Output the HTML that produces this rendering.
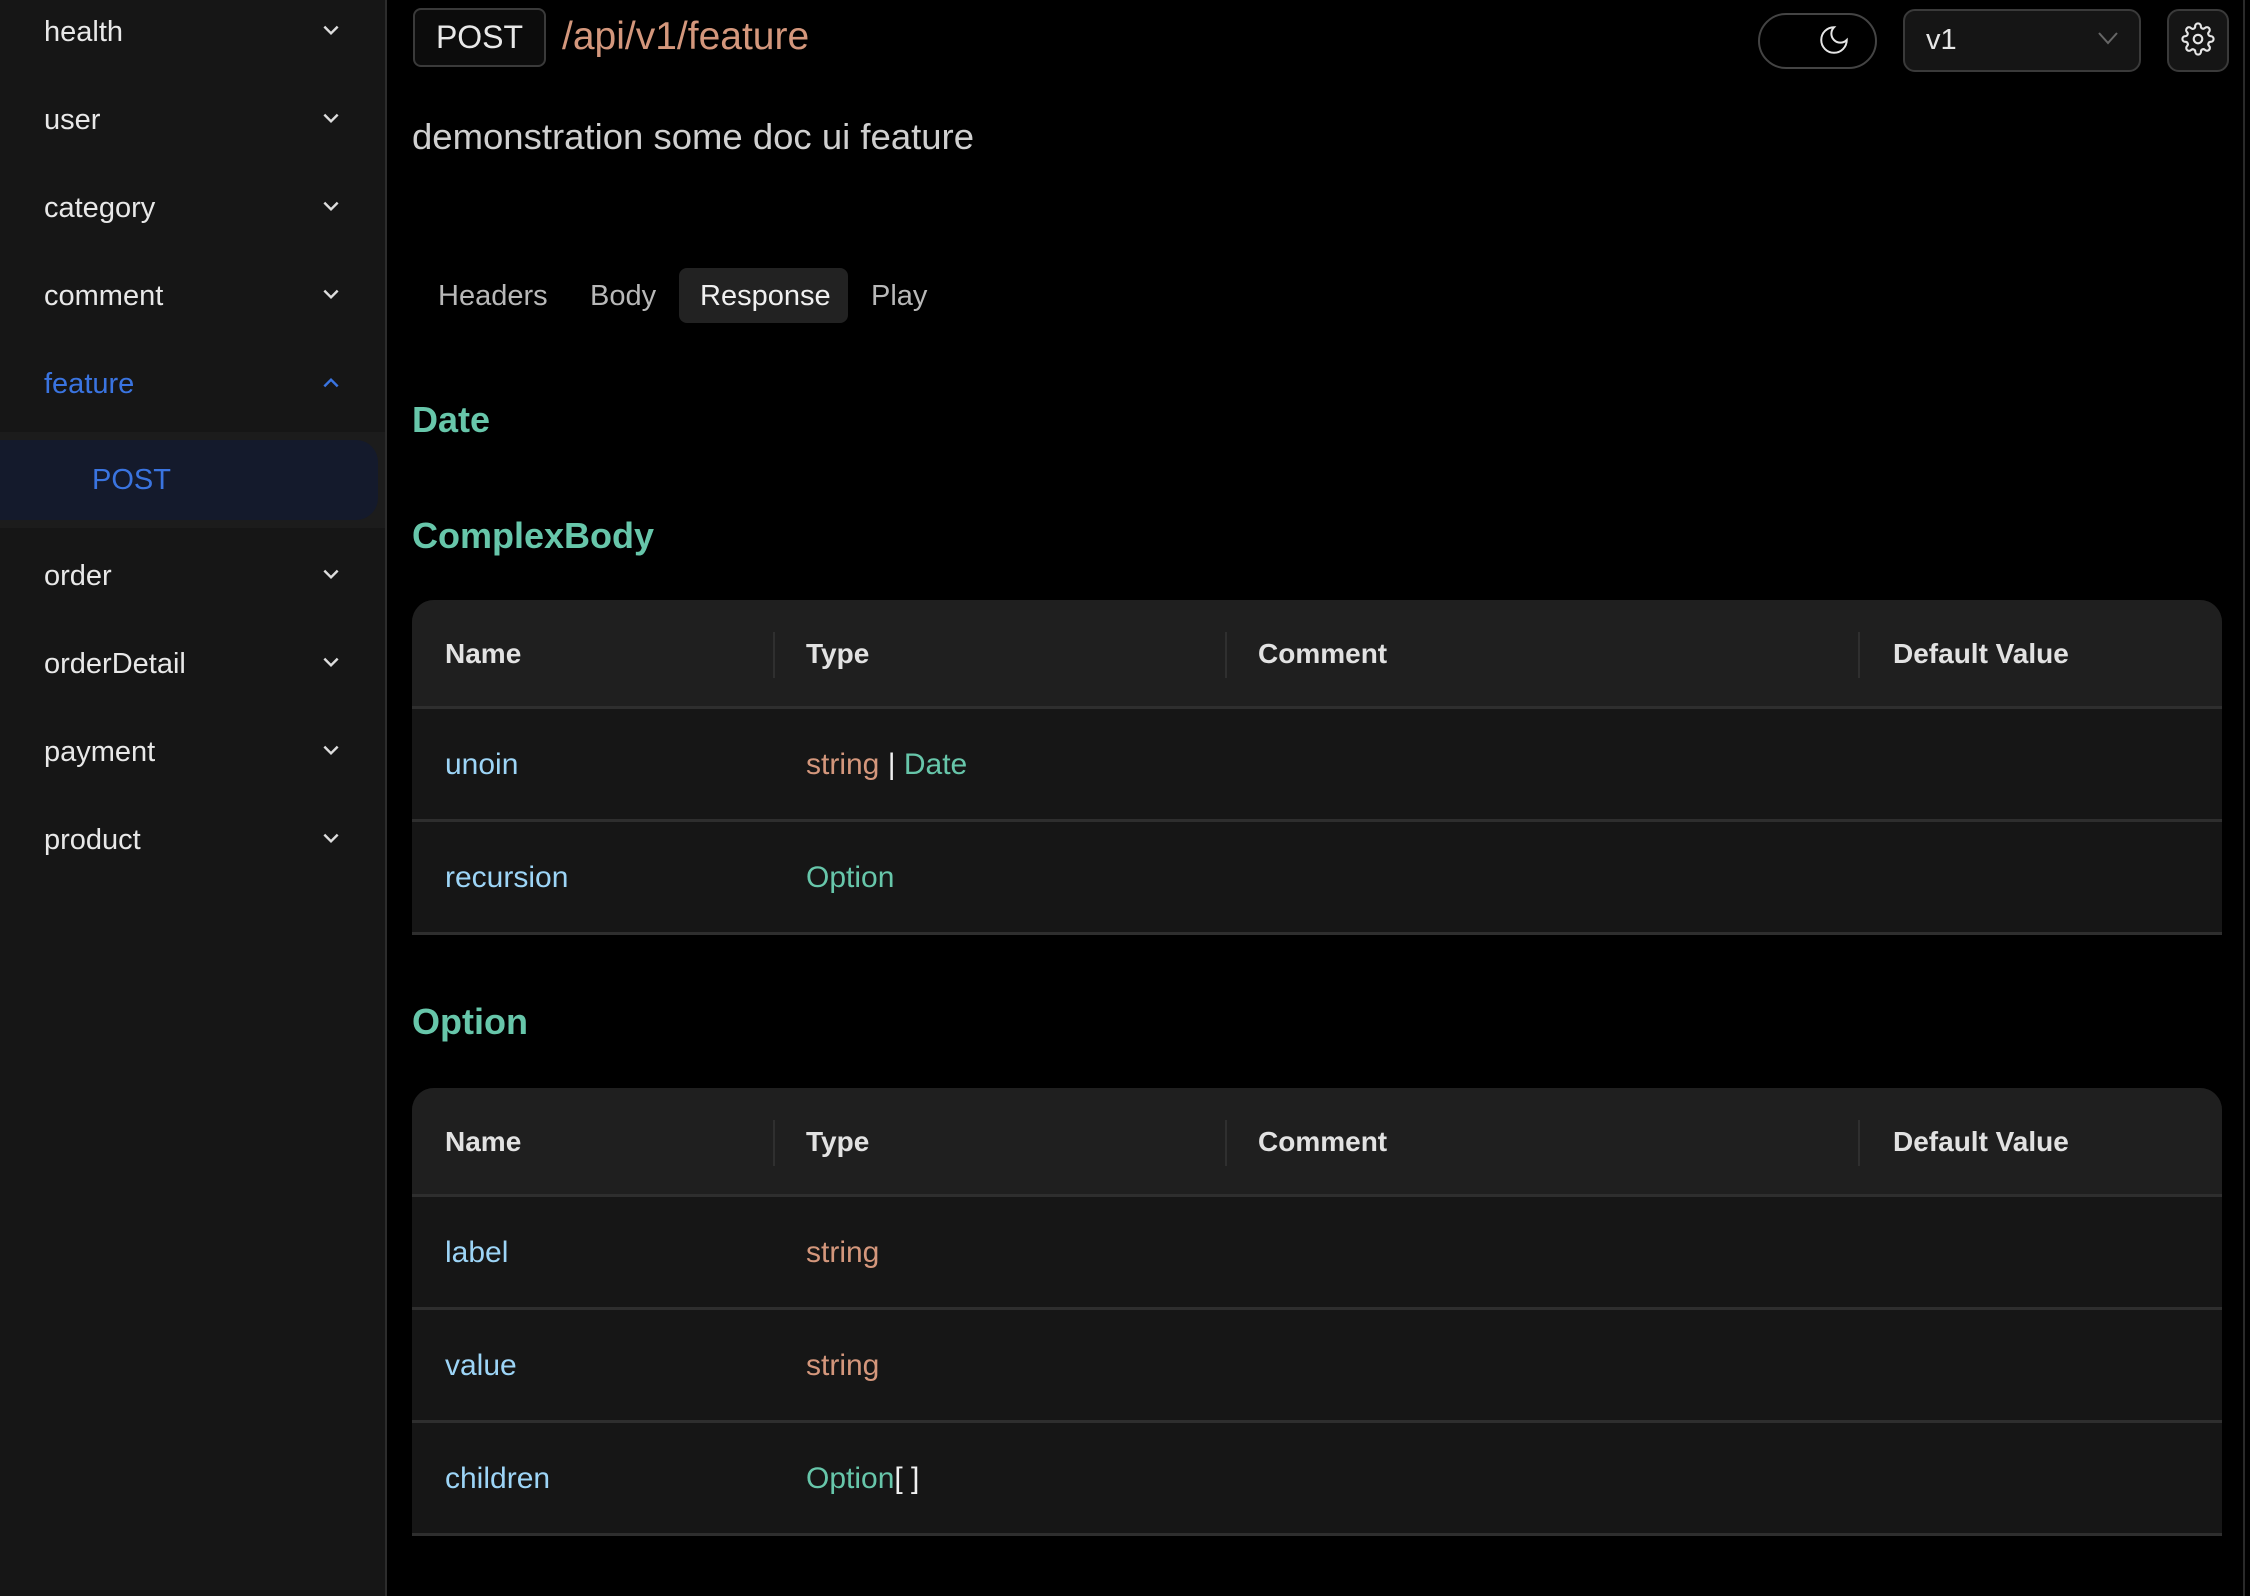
<!DOCTYPE html>
<html><head><meta charset="utf-8"><style>
*{box-sizing:border-box;margin:0;padding:0}
body{width:2250px;height:1596px;background:#000;font-family:"Liberation Sans",sans-serif;position:relative;overflow:hidden;color:#e6e6e6}
.abs{position:absolute}
.side{left:0;top:0;width:387px;height:1596px;background:#161616;border-right:2px solid #2c2c2c}
.it{position:absolute;left:44px;font-size:29px;color:#e8e8e8;line-height:40px}
.chev{position:absolute;left:321px;width:20px;height:20px}
.sub{left:0;top:432px;width:385px;height:96px;background:#1c1c1c}
.pill{left:0;top:440px;width:378px;height:80px;background:#141a2c;border-radius:0 22px 22px 0}
.tbl{position:absolute;left:412px;width:1810px;background:#161616;border-radius:22px 22px 0 0;overflow:hidden}
.hd{height:109px;background:#1f1f1f;border-bottom:3px solid #2e2e2e;position:relative}
.row{height:113px;border-bottom:3px solid #2e2e2e;position:relative}
.th{position:absolute;top:0;line-height:108px;font-size:28px;font-weight:bold;color:#e2e2e2}
.dv{position:absolute;top:32px;width:2px;height:46px;background:#2f2f2f}
.td{position:absolute;top:0;line-height:112px;font-size:30px}
.n{color:#9dd5f7}.s{color:#d4977c}.t{color:#67c6aa}.w{color:#f0f0f0}
.h2{position:absolute;left:412px;font-size:36px;font-weight:bold;color:#67c6aa}
</style></head><body>
<div class="abs side"></div>
<div class="abs sub"></div>
<div class="abs pill"></div>
<div class="it" style="top:12px">health</div>
<div class="it" style="top:100px">user</div>
<div class="it" style="top:188px">category</div>
<div class="it" style="top:276px">comment</div>
<div class="it" style="top:364px;color:#3a74e0">feature</div>
<div class="it" style="top:460px;left:92px;color:#3a74e0">POST</div>
<div class="it" style="top:556px">order</div>
<div class="it" style="top:644px">orderDetail</div>
<div class="it" style="top:732px">payment</div>
<div class="it" style="top:820px">product</div>
<svg class="chev" style="top:20px" viewBox="0 0 18 18"><path d="M3 6l6 6 6-6" fill="none" stroke="#ddd" stroke-width="2.2"/></svg>
<svg class="chev" style="top:108px" viewBox="0 0 18 18"><path d="M3 6l6 6 6-6" fill="none" stroke="#ddd" stroke-width="2.2"/></svg>
<svg class="chev" style="top:196px" viewBox="0 0 18 18"><path d="M3 6l6 6 6-6" fill="none" stroke="#ddd" stroke-width="2.2"/></svg>
<svg class="chev" style="top:284px" viewBox="0 0 18 18"><path d="M3 6l6 6 6-6" fill="none" stroke="#ddd" stroke-width="2.2"/></svg>
<svg class="chev" style="top:373px" viewBox="0 0 18 18"><path d="M3 12l6-6 6 6" fill="none" stroke="#3a74e0" stroke-width="2.2"/></svg>
<svg class="chev" style="top:564px" viewBox="0 0 18 18"><path d="M3 6l6 6 6-6" fill="none" stroke="#ddd" stroke-width="2.2"/></svg>
<svg class="chev" style="top:652px" viewBox="0 0 18 18"><path d="M3 6l6 6 6-6" fill="none" stroke="#ddd" stroke-width="2.2"/></svg>
<svg class="chev" style="top:740px" viewBox="0 0 18 18"><path d="M3 6l6 6 6-6" fill="none" stroke="#ddd" stroke-width="2.2"/></svg>
<svg class="chev" style="top:828px" viewBox="0 0 18 18"><path d="M3 6l6 6 6-6" fill="none" stroke="#ddd" stroke-width="2.2"/></svg>

<div class="abs" style="left:413px;top:8px;width:133px;height:59px;background:#0c0c0c;border:2px solid #3a3a3a;border-radius:8px;font-size:32px;line-height:55px;text-align:center;color:#e8e8e8">POST</div>
<div class="abs" style="left:562px;top:12px;font-size:39px;line-height:50px;color:#d4977c">/api/v1/feature</div>
<div class="abs" style="left:412px;top:114px;font-size:36.5px;line-height:46px;color:#cfcfcf">demonstration some doc ui feature</div>

<div class="abs" style="left:1758px;top:13px;width:119px;height:56px;border:2px solid #444;border-radius:28px"></div>
<svg class="abs" style="left:1817px;top:23px" width="34" height="34" viewBox="0 0 24 24"><path d="M12 3a6 6 0 0 0 9 9 9 9 0 1 1-9-9z" fill="none" stroke="#e6e6e6" stroke-width="1.4"/></svg>
<div class="abs" style="left:1903px;top:9px;width:238px;height:63px;background:#151515;border:2px solid #3a3a3a;border-radius:12px"></div>
<div class="abs" style="left:1926px;top:20px;font-size:29px;line-height:40px;color:#e6e6e6">v1</div>
<svg class="abs" style="left:2097px;top:30px" width="22" height="16" viewBox="0 0 22 16"><path d="M2 3l9 10 9-10" fill="none" stroke="#666" stroke-width="2"/></svg>
<div class="abs" style="left:2167px;top:9px;width:62px;height:63px;background:#151515;border:2px solid #3a3a3a;border-radius:12px"></div>
<svg class="abs" style="left:2181px;top:22px" width="34" height="34" viewBox="0 0 24 24" fill="none" stroke="#e6e6e6" stroke-width="1.5"><circle cx="12" cy="12" r="3"/><path d="M19.4 15a1.650 1.65 0 0 0 .33 1.82l.06.06a2 2 0 1 1-2.830 2.83l-.06-.06a1.65 1.65 0 0 0-1.82-.33 1.65 1.65 0 0 0-1 1.51V21a2 2 0 1 1-4 0v-.09A1.65 1.65 0 0 0 9 19.4a1.65 1.65 0 0 0-1.82.33l-.06.06a2 2 0 1 1-2.83-2.83l.06-.06A1.65 1.65 0 0 0 4.68 15a1.65 1.65 0 0 0-1.51-1H3a2 2 0 1 1 0-4h.09A1.65 1.65 0 0 0 4.6 9a1.65 1.65 0 0 0-.33-1.82l-.06-.06a2 2 0 1 1 2.83-2.83l.06.06A1.65 1.65 0 0 0 9 4.68a1.65 1.65 0 0 0 1-1.51V3a2 2 0 1 1 4 0v.09a1.65 1.65 0 0 0 1 1.51 1.65 1.65 0 0 0 1.82-.33l.06-.06a2 2 0 1 1 2.83 2.83l-.06.06A1.65 1.65 0 0 0 19.4 9a1.65 1.65 0 0 0 1.51 1H21a2 2 0 1 1 0 4h-.09a1.65 1.65 0 0 0-1.51 1z"/></svg>
<div class="abs" style="left:2243px;top:0;width:2px;height:1596px;background:#2a2a2a"></div>

<div class="abs" style="left:679px;top:268px;width:169px;height:55px;background:#222;border-radius:8px"></div>
<div class="abs" style="left:438px;top:276px;font-size:29px;line-height:40px;color:#b8b8b8">Headers</div>
<div class="abs" style="left:590px;top:276px;font-size:29px;line-height:40px;color:#b8b8b8">Body</div>
<div class="abs" style="left:700px;top:276px;font-size:29px;line-height:40px;color:#f0f0f0">Response</div>
<div class="abs" style="left:871px;top:276px;font-size:29px;line-height:40px;color:#b8b8b8">Play</div>

<div class="h2" style="top:399px">Date</div>
<div class="h2" style="top:515px">ComplexBody</div>
<div class="tbl" style="top:600px">
 <div class="hd"><div class="th" style="left:33px">Name</div><div class="dv" style="left:361px"></div><div class="th" style="left:394px">Type</div><div class="dv" style="left:813px"></div><div class="th" style="left:846px">Comment</div><div class="dv" style="left:1446px"></div><div class="th" style="left:1481px">Default Value</div></div>
 <div class="row"><div class="td n" style="left:33px">unoin</div><div class="td" style="left:394px"><span class="s">string</span> <span class="w">|</span> <span class="t">Date</span></div></div>
 <div class="row"><div class="td n" style="left:33px">recursion</div><div class="td t" style="left:394px">Option</div></div>
</div>
<div class="h2" style="top:1001px">Option</div>
<div class="tbl" style="top:1088px">
 <div class="hd"><div class="th" style="left:33px">Name</div><div class="dv" style="left:361px"></div><div class="th" style="left:394px">Type</div><div class="dv" style="left:813px"></div><div class="th" style="left:846px">Comment</div><div class="dv" style="left:1446px"></div><div class="th" style="left:1481px">Default Value</div></div>
 <div class="row"><div class="td n" style="left:33px">label</div><div class="td s" style="left:394px">string</div></div>
 <div class="row"><div class="td n" style="left:33px">value</div><div class="td s" style="left:394px">string</div></div>
 <div class="row"><div class="td n" style="left:33px">children</div><div class="td" style="left:394px"><span class="t">Option</span><span class="w">[ ]</span></div></div>
</div>
</body></html>
